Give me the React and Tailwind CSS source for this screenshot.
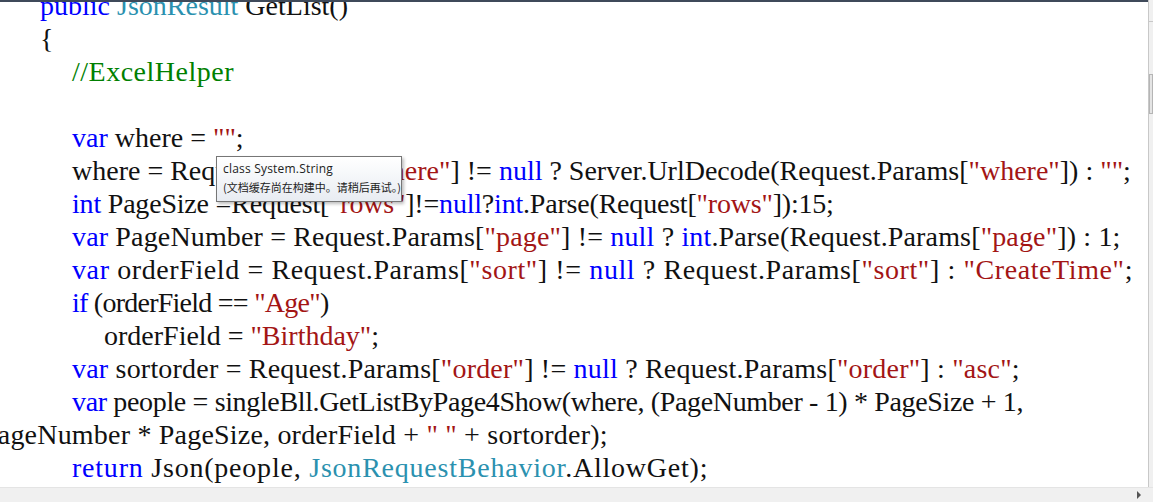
const K = ({ children }) => <span className="text-[#0000ff]">{children}</span>
const T = ({ children }) => <span className="text-[#2b91af]">{children}</span>
const S = ({ children }) => <span className="text-[#a31515]">{children}</span>
const C = ({ children }) => <span className="text-[#008000]">{children}</span>

const INDENT = ['pl-[40px]', 'pl-[72px]', 'pl-[104px]']

const Line = ({ indent = 0, track = '', children }) => (
  <div className={`h-[33px] leading-[33px] whitespace-pre ${INDENT[indent]} ${track}`}>{children}</div>
)

export default function App() {
  return (
    <div className="relative w-[1153px] h-[502px] bg-white overflow-hidden flex flex-col">
      <div className="flex flex-1 min-h-0">
        <div className="flex-1 min-w-0 relative border-t-2 border-[#3f4a5a] overflow-hidden">
          <div className="mt-[-13px] text-[28px] text-[#111] font-['Liberation_Serif','Times_New_Roman',serif]">
            <Line><K>public</K> <T>JsonResult</T> GetList()</Line>
            <Line>{'{'}</Line>
            <Line indent={1} track="tracking-[0.5px]"><C>//ExcelHelper</C></Line>
            <Line indent={1}> </Line>
            <Line indent={1}><K>var</K> where = <S>""</S>;</Line>
            <Line indent={1}>where = Request.Params[<S>"where"</S>] != <K>null</K> ? Server.UrlDecode(Request.Params[<S>"where"</S>]) : <S>""</S>;</Line>
            <Line indent={1} track="tracking-[-0.2px]"><K>int</K> PageSize =Request[<S>"rows"</S>]!=<K>null</K>?<K>int</K>.Parse(Request[<S>"rows"</S>]):15;</Line>
            <Line indent={1} track="tracking-[0.15px]"><K>var</K> PageNumber = Request.Params[<S>"page"</S>] != <K>null</K> ? <K>int</K>.Parse(Request.Params[<S>"page"</S>]) : 1;</Line>
            <Line indent={1} track="tracking-[0.6px]"><K>var</K> orderField = Request.Params[<S>"sort"</S>] != <K>null</K> ? Request.Params[<S>"sort"</S>] : <S>"CreateTime"</S>;</Line>
            <Line indent={1} track="tracking-[-0.75px]"><K>if</K> (orderField == <S>"Age"</S>)</Line>
            <Line indent={2}>orderField = <S>"Birthday"</S>;</Line>
            <Line indent={1} track="tracking-[0.2px]"><K>var</K> sortorder = Request.Params[<S>"order"</S>] != <K>null</K> ? Request.Params[<S>"order"</S>] : <S>"asc"</S>;</Line>
            <Line indent={1} track="tracking-[-0.35px]"><K>var</K> people = singleBll.GetListByPage4Show(where, (PageNumber - 1) * PageSize + 1,</Line>
            <div className="h-[33px] leading-[33px] whitespace-pre ml-[-18px] tracking-[0.2px]">PageNumber * PageSize, orderField + <S>" "</S> + sortorder);</div>
            <Line indent={1} track="tracking-[0.78px]"><K>return</K> Json(people, <T>JsonRequestBehavior</T>.AllowGet);</Line>
          </div>

          {/* quick info tooltip */}
          <div className="absolute left-[216px] top-[154px] w-[186px] h-[46px] border border-[#767676] bg-gradient-to-b from-white to-[#e8ecf2] shadow-[2px_2px_3px_rgba(0,0,0,0.25)] px-[6px] pt-[3px] leading-[18px] text-[#222] font-['Open_Sans','Noto_Sans_CJK_SC',sans-serif]">
            <div className="text-[12px] tracking-[0.2px]">class System.String</div>
            <div className="text-[11px] whitespace-nowrap font-['Noto_Sans_CJK_SC',sans-serif]">(文档缓存尚在构建中。请稍后再试。)</div>
          </div>
        </div>
        <div className="w-[5px] border-l border-[#c8c8c8] bg-[#f0f0f0] flex flex-col">
          <div className="h-[22px] border-b border-[#c8c8c8]" />
          <div className="mt-[52px] h-[40px] border border-[#b5b5b5] bg-[#e4e4e4]" />
        </div>
      </div>
      <div className="h-[15px] bg-[#f0f0f0] border-t border-[#e4e4e4] flex items-center justify-end pr-[12px]">
        <div className="w-0 h-0 border-y-[4px] border-y-transparent border-l-[4px] border-l-[#555]" />
      </div>
    </div>
  )
}
